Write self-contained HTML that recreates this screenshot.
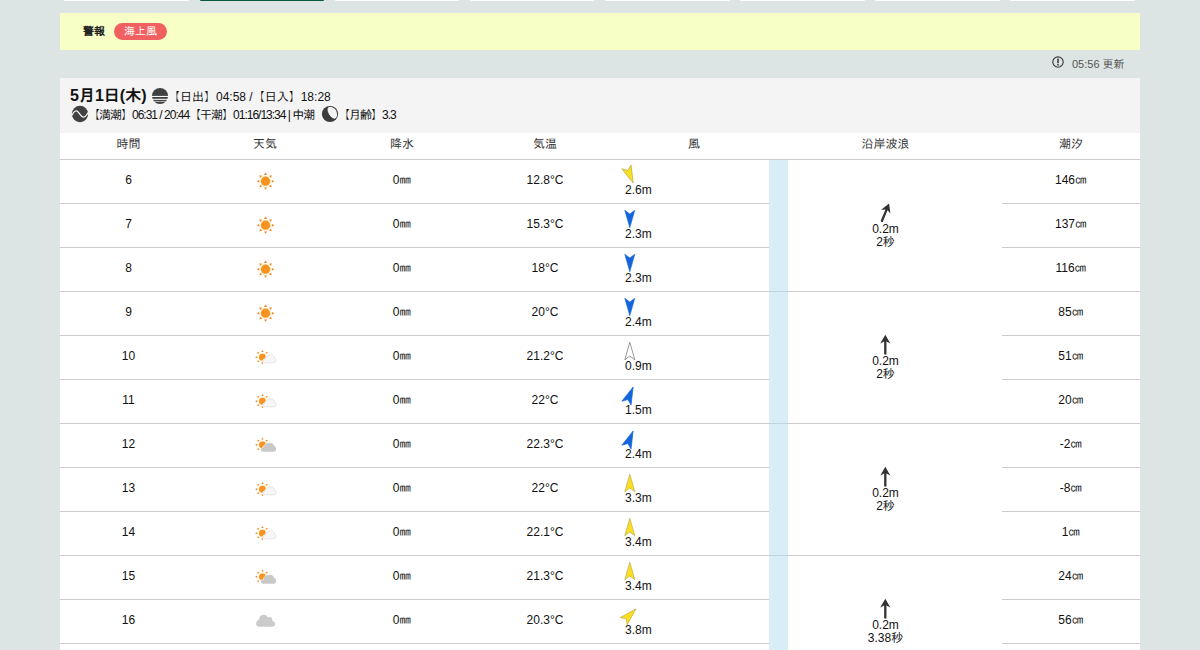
<!DOCTYPE html><html lang="ja"><head><meta charset="utf-8"><title>天気</title><style>
*{box-sizing:border-box;margin:0;padding:0}
html,body{width:1200px;height:650px;overflow:hidden}
body{background:#dde5e4;font-family:"Liberation Sans","IPAGothic",sans-serif;font-size:12px;color:#111;position:relative}
.tabs{position:absolute;left:65px;top:-20px;height:21px;width:1080px}
.tab{position:absolute;top:0;width:124.8px;height:21px;background:#fff;border-radius:0 0 1px 1px}
.tab.on{background:#0b5a3c}
.alert{position:absolute;left:60px;top:13px;width:1080px;height:37px;background:#f7ffc6}
.alert .lbl{position:absolute;left:23px;top:11px;font-size:11px;font-weight:bold;line-height:14px;color:#222}
.badge{position:absolute;left:54px;top:10px;width:53px;height:17px;border-radius:9px;background:#f06060;color:#fff;font-size:11px;line-height:17px;text-align:center}
.upd{position:absolute;left:1050px;top:56px;height:14px;font-size:11px;line-height:14px;color:#555}
.upd svg{position:absolute;left:1px;top:-1px}
.upd span{position:absolute;left:22px;top:1px;white-space:nowrap}
.day{position:absolute;left:60px;top:78px;width:1080px;height:600px;background:#f4f4f4}
.d1{position:absolute;left:10px;top:9px;font-size:16px;font-weight:bold;line-height:18px;white-space:nowrap;color:#111}
.sunic{position:absolute;left:91px;top:9px}
.sr{position:absolute;left:108px;top:12px;font-size:12px;line-height:14px;white-space:nowrap}
.tideic{position:absolute;left:11px;top:27px}
.td{position:absolute;left:28px;top:30px;font-size:12px;line-height:14px;white-space:nowrap;letter-spacing:-1px}
.moonic{position:absolute;left:261px;top:27px}
.mn{position:absolute;left:278px;top:30px;font-size:12px;line-height:14px;white-space:nowrap;letter-spacing:-1px}
table{position:absolute;left:0;top:55px;width:1080px;border-collapse:collapse;background:#fff;table-layout:fixed}
th{height:26px;font-weight:normal;font-size:12px;line-height:14px;padding:0 0 4px;color:#333;text-align:center;vertical-align:middle;border-bottom:1px solid #ccc}
td{height:44px;text-align:center;vertical-align:middle;border-bottom:1px solid #ccc;font-size:12px;line-height:14px;padding:0 0 3px;position:relative}
td.wind{text-align:left}
td.wind svg{position:absolute;left:0;top:0}
td.wind span{position:absolute;left:6px;top:23px;line-height:14px}
td.wave{border-bottom:1px solid #ccc}
td.wave .in{position:absolute;left:0;top:0;width:100%;height:100%}
.strip{position:absolute;left:709px;top:82px;width:19px;height:600px;background:rgba(179,219,239,0.5)}
td.wx svg{position:absolute;left:43px;top:0}
</style></head><body><div class="tabs"><div class="tab" style="left:-0.6px"></div><div class="tab on" style="left:134.5px"></div><div class="tab" style="left:269.6px"></div><div class="tab" style="left:404.7px"></div><div class="tab" style="left:539.8px"></div><div class="tab" style="left:674.9px"></div><div class="tab" style="left:810.0px"></div><div class="tab" style="left:945.1px"></div></div><div class="alert"><span class="lbl">警報</span><span class="badge">海上風</span></div><div class="upd"><svg width="14" height="14" viewBox="0 0 14 14"><circle cx="7" cy="7" r="5.2" fill="none" stroke="#3a3a3a" stroke-width="1.15"/><rect x="6.2" y="3.6" width="1.6" height="4.6" fill="#3a3a3a"/><rect x="6.2" y="9.1" width="1.6" height="1.5" fill="#3a3a3a"/></svg><span>05:56 更新</span></div><div class="day"><div class="d1">5月1日(木)</div><svg class="sunic" width="18" height="18" viewBox="0 0 18 18"><defs><clipPath id="c1"><circle cx="9" cy="9" r="8.05"/></clipPath></defs><g clip-path="url(#c1)" fill="#414141"><rect x="0" y="0" width="18" height="8.9"/><rect x="0" y="10" width="18" height="1.8"/><rect x="0" y="12.9" width="18" height="1.5"/><rect x="0" y="15" width="18" height="3"/></g></svg><div class="sr">【日出】04:58 /【日入】18:28</div><svg class="tideic" width="18" height="18" viewBox="0 0 18 18"><circle cx="9" cy="9" r="8.15" fill="#414141"/><path d="M1.1,10.2 C2.8,6.2 5.2,5 6.9,6.8 C8.1,8 9.5,10.5 11,11.6 C13,13 15.3,11.5 17,7.6" fill="none" stroke="#f4f4f4" stroke-width="1.25"/></svg><div class="td">【満潮】06:31 / 20:44【干潮】01:16/13:34 | 中潮</div><svg class="moonic" width="18" height="18" viewBox="0 0 18 18"><defs><clipPath id="c2"><circle cx="9" cy="9" r="7.05"/></clipPath></defs><circle cx="9" cy="9" r="8.1" fill="#3c3c3c"/><g clip-path="url(#c2)" fill="#f2f2f2"><ellipse cx="11.3" cy="7.6" rx="6.7" ry="3.7" transform="rotate(58 11.3 7.6)"/><path d="M6,-0.9 L16.6,16.1 L26.8,9.7 L16.2,-7.2 Z"/></g></svg><div class="mn">【月齢】3.3</div><table><colgroup><col style="width:137px"><col style="width:136px"><col style="width:138px"><col style="width:148px"><col style="width:150px"><col style="width:233px"><col style="width:138px"></colgroup><tr><th>時間</th><th>天気</th><th>降水</th><th>気温</th><th>風</th><th>沿岸波浪</th><th>潮汐</th></tr><tr><td>6</td><td class="wx"><svg width="60" height="40" viewBox="0 0 975 650"><circle cx="415" cy="345" r="92" fill="#fff1d6"/><circle cx="415" cy="345" r="75" fill="#f7931e"/><path transform="translate(415,345) rotate(0)" d="M0,-140 L26,-102 L-26,-102 Z" fill="#f08a24"/><path transform="translate(415,345) rotate(45)" d="M0,-140 L26,-102 L-26,-102 Z" fill="#f08a24"/><path transform="translate(415,345) rotate(90)" d="M0,-140 L26,-102 L-26,-102 Z" fill="#f08a24"/><path transform="translate(415,345) rotate(135)" d="M0,-140 L26,-102 L-26,-102 Z" fill="#f08a24"/><path transform="translate(415,345) rotate(180)" d="M0,-140 L26,-102 L-26,-102 Z" fill="#f08a24"/><path transform="translate(415,345) rotate(225)" d="M0,-140 L26,-102 L-26,-102 Z" fill="#f08a24"/><path transform="translate(415,345) rotate(270)" d="M0,-140 L26,-102 L-26,-102 Z" fill="#f08a24"/><path transform="translate(415,345) rotate(315)" d="M0,-140 L26,-102 L-26,-102 Z" fill="#f08a24"/></svg></td><td>0㎜</td><td>12.8°C</td><td class="wind"><svg width="40" height="44" viewBox="0 0 40 44"><g transform="translate(10.8,15) rotate(157.5)"><path d="M0,-8.75 L5,8.75 L0,5 L-5,8.75 Z" fill="#fbe01f" stroke="#b4a03c" stroke-width="0.6" stroke-linejoin="miter"/></g></svg><span>2.6m</span></td><td class="wave" rowspan="3"><div class="in"><svg style="position:absolute;left:101px;top:40px" width="30" height="24" viewBox="-15 -12 30 24"><g transform="translate(0.3,0.7) rotate(22.5)"><path d="M0,-10 L5.05,-1.1 L1.15,-3.1 L1.15,9.5 L0,10.1 L-1.15,9.5 L-1.15,-3.1 L-5.05,-1.1 Z" fill="#333"/></g></svg><div style="position:absolute;left:0;width:233px;top:63px;line-height:13px;text-align:center">0.2m<br>2秒</div></div></td><td>146㎝</td></tr><tr><td>7</td><td class="wx"><svg width="60" height="40" viewBox="0 0 975 650"><circle cx="415" cy="345" r="92" fill="#fff1d6"/><circle cx="415" cy="345" r="75" fill="#f7931e"/><path transform="translate(415,345) rotate(0)" d="M0,-140 L26,-102 L-26,-102 Z" fill="#f08a24"/><path transform="translate(415,345) rotate(45)" d="M0,-140 L26,-102 L-26,-102 Z" fill="#f08a24"/><path transform="translate(415,345) rotate(90)" d="M0,-140 L26,-102 L-26,-102 Z" fill="#f08a24"/><path transform="translate(415,345) rotate(135)" d="M0,-140 L26,-102 L-26,-102 Z" fill="#f08a24"/><path transform="translate(415,345) rotate(180)" d="M0,-140 L26,-102 L-26,-102 Z" fill="#f08a24"/><path transform="translate(415,345) rotate(225)" d="M0,-140 L26,-102 L-26,-102 Z" fill="#f08a24"/><path transform="translate(415,345) rotate(270)" d="M0,-140 L26,-102 L-26,-102 Z" fill="#f08a24"/><path transform="translate(415,345) rotate(315)" d="M0,-140 L26,-102 L-26,-102 Z" fill="#f08a24"/></svg></td><td>0㎜</td><td>15.3°C</td><td class="wind"><svg width="40" height="44" viewBox="0 0 40 44"><g transform="translate(10.8,15) rotate(180)"><path d="M0,-8.75 L5,8.75 L0,5 L-5,8.75 Z" fill="#1464dc" stroke="#1464dc" stroke-width="0.6" stroke-linejoin="miter"/></g></svg><span>2.3m</span></td><td>137㎝</td></tr><tr><td>8</td><td class="wx"><svg width="60" height="40" viewBox="0 0 975 650"><circle cx="415" cy="345" r="92" fill="#fff1d6"/><circle cx="415" cy="345" r="75" fill="#f7931e"/><path transform="translate(415,345) rotate(0)" d="M0,-140 L26,-102 L-26,-102 Z" fill="#f08a24"/><path transform="translate(415,345) rotate(45)" d="M0,-140 L26,-102 L-26,-102 Z" fill="#f08a24"/><path transform="translate(415,345) rotate(90)" d="M0,-140 L26,-102 L-26,-102 Z" fill="#f08a24"/><path transform="translate(415,345) rotate(135)" d="M0,-140 L26,-102 L-26,-102 Z" fill="#f08a24"/><path transform="translate(415,345) rotate(180)" d="M0,-140 L26,-102 L-26,-102 Z" fill="#f08a24"/><path transform="translate(415,345) rotate(225)" d="M0,-140 L26,-102 L-26,-102 Z" fill="#f08a24"/><path transform="translate(415,345) rotate(270)" d="M0,-140 L26,-102 L-26,-102 Z" fill="#f08a24"/><path transform="translate(415,345) rotate(315)" d="M0,-140 L26,-102 L-26,-102 Z" fill="#f08a24"/></svg></td><td>0㎜</td><td>18°C</td><td class="wind"><svg width="40" height="44" viewBox="0 0 40 44"><g transform="translate(10.8,15) rotate(180)"><path d="M0,-8.75 L5,8.75 L0,5 L-5,8.75 Z" fill="#1464dc" stroke="#1464dc" stroke-width="0.6" stroke-linejoin="miter"/></g></svg><span>2.3m</span></td><td>116㎝</td></tr><tr><td>9</td><td class="wx"><svg width="60" height="40" viewBox="0 0 975 650"><circle cx="415" cy="345" r="92" fill="#fff1d6"/><circle cx="415" cy="345" r="75" fill="#f7931e"/><path transform="translate(415,345) rotate(0)" d="M0,-140 L26,-102 L-26,-102 Z" fill="#f08a24"/><path transform="translate(415,345) rotate(45)" d="M0,-140 L26,-102 L-26,-102 Z" fill="#f08a24"/><path transform="translate(415,345) rotate(90)" d="M0,-140 L26,-102 L-26,-102 Z" fill="#f08a24"/><path transform="translate(415,345) rotate(135)" d="M0,-140 L26,-102 L-26,-102 Z" fill="#f08a24"/><path transform="translate(415,345) rotate(180)" d="M0,-140 L26,-102 L-26,-102 Z" fill="#f08a24"/><path transform="translate(415,345) rotate(225)" d="M0,-140 L26,-102 L-26,-102 Z" fill="#f08a24"/><path transform="translate(415,345) rotate(270)" d="M0,-140 L26,-102 L-26,-102 Z" fill="#f08a24"/><path transform="translate(415,345) rotate(315)" d="M0,-140 L26,-102 L-26,-102 Z" fill="#f08a24"/></svg></td><td>0㎜</td><td>20°C</td><td class="wind"><svg width="40" height="44" viewBox="0 0 40 44"><g transform="translate(10.8,15) rotate(180)"><path d="M0,-8.75 L5,8.75 L0,5 L-5,8.75 Z" fill="#1464dc" stroke="#1464dc" stroke-width="0.6" stroke-linejoin="miter"/></g></svg><span>2.4m</span></td><td class="wave" rowspan="3"><div class="in"><svg style="position:absolute;left:101px;top:40px" width="30" height="24" viewBox="-15 -12 30 24"><g transform="translate(0.3,0.7) rotate(0)"><path d="M0,-10 L5.05,-1.1 L1.15,-3.1 L1.15,9.5 L0,10.1 L-1.15,9.5 L-1.15,-3.1 L-5.05,-1.1 Z" fill="#333"/></g></svg><div style="position:absolute;left:0;width:233px;top:63px;line-height:13px;text-align:center">0.2m<br>2秒</div></div></td><td>85㎝</td></tr><tr><td>10</td><td class="wx"><svg width="60" height="40" viewBox="0 0 975 650"><circle cx="365" cy="345" r="70" fill="#fff1d6"/><circle cx="365" cy="345" r="55" fill="#f7931e"/><path transform="translate(365,345) rotate(0)" d="M0,-118 L20,-86 L-20,-86 Z" fill="#f08a24"/><path transform="translate(365,345) rotate(45)" d="M0,-118 L20,-86 L-20,-86 Z" fill="#f08a24"/><path transform="translate(365,345) rotate(90)" d="M0,-118 L20,-86 L-20,-86 Z" fill="#f08a24"/><path transform="translate(365,345) rotate(135)" d="M0,-118 L20,-86 L-20,-86 Z" fill="#f08a24"/><path transform="translate(365,345) rotate(180)" d="M0,-118 L20,-86 L-20,-86 Z" fill="#f08a24"/><path transform="translate(365,345) rotate(225)" d="M0,-118 L20,-86 L-20,-86 Z" fill="#f08a24"/><path transform="translate(365,345) rotate(270)" d="M0,-118 L20,-86 L-20,-86 Z" fill="#f08a24"/><path transform="translate(365,345) rotate(315)" d="M0,-118 L20,-86 L-20,-86 Z" fill="#f08a24"/><g transform="translate(92.4,30.0) scale(0.84,0.9)"><path d="M375,450 C352,450 340,435 340,418 C340,398 355,385 378,385 C385,340 430,305 485,305 C520,305 545,325 552,355 C575,362 587,385 587,410 C587,435 570,450 548,450 Z" fill="#fff" stroke="#fff" stroke-width="26"/><path d="M375,450 C352,450 340,435 340,418 C340,398 355,385 378,385 C385,340 430,305 485,305 C520,305 545,325 552,355 C575,362 587,385 587,410 C587,435 570,450 548,450 Z" fill="#f7f7fa" stroke="#d2d2da" stroke-width="10"/></g></svg></td><td>0㎜</td><td>21.2°C</td><td class="wind"><svg width="40" height="44" viewBox="0 0 40 44"><g transform="translate(10.8,15) rotate(0)"><path d="M0,-8.75 L5,8.75 L0,5 L-5,8.75 Z" fill="#ffffff" stroke="#555" stroke-width="0.6" stroke-linejoin="miter"/></g></svg><span>0.9m</span></td><td>51㎝</td></tr><tr><td>11</td><td class="wx"><svg width="60" height="40" viewBox="0 0 975 650"><circle cx="365" cy="345" r="70" fill="#fff1d6"/><circle cx="365" cy="345" r="55" fill="#f7931e"/><path transform="translate(365,345) rotate(0)" d="M0,-118 L20,-86 L-20,-86 Z" fill="#f08a24"/><path transform="translate(365,345) rotate(45)" d="M0,-118 L20,-86 L-20,-86 Z" fill="#f08a24"/><path transform="translate(365,345) rotate(90)" d="M0,-118 L20,-86 L-20,-86 Z" fill="#f08a24"/><path transform="translate(365,345) rotate(135)" d="M0,-118 L20,-86 L-20,-86 Z" fill="#f08a24"/><path transform="translate(365,345) rotate(180)" d="M0,-118 L20,-86 L-20,-86 Z" fill="#f08a24"/><path transform="translate(365,345) rotate(225)" d="M0,-118 L20,-86 L-20,-86 Z" fill="#f08a24"/><path transform="translate(365,345) rotate(270)" d="M0,-118 L20,-86 L-20,-86 Z" fill="#f08a24"/><path transform="translate(365,345) rotate(315)" d="M0,-118 L20,-86 L-20,-86 Z" fill="#f08a24"/><g transform="translate(92.4,30.0) scale(0.84,0.9)"><path d="M375,450 C352,450 340,435 340,418 C340,398 355,385 378,385 C385,340 430,305 485,305 C520,305 545,325 552,355 C575,362 587,385 587,410 C587,435 570,450 548,450 Z" fill="#fff" stroke="#fff" stroke-width="26"/><path d="M375,450 C352,450 340,435 340,418 C340,398 355,385 378,385 C385,340 430,305 485,305 C520,305 545,325 552,355 C575,362 587,385 587,410 C587,435 570,450 548,450 Z" fill="#f7f7fa" stroke="#d2d2da" stroke-width="10"/></g></svg></td><td>0㎜</td><td>22°C</td><td class="wind"><svg width="40" height="44" viewBox="0 0 40 44"><g transform="translate(10.8,15) rotate(22.5)"><path d="M0,-8.75 L5,8.75 L0,5 L-5,8.75 Z" fill="#1464dc" stroke="#1464dc" stroke-width="0.6" stroke-linejoin="miter"/></g></svg><span>1.5m</span></td><td>20㎝</td></tr><tr><td>12</td><td class="wx"><svg width="60" height="40" viewBox="0 0 975 650"><circle cx="365" cy="338" r="70" fill="#fff1d6"/><circle cx="365" cy="338" r="55" fill="#f7931e"/><path transform="translate(365,338) rotate(0)" d="M0,-118 L20,-86 L-20,-86 Z" fill="#f08a24"/><path transform="translate(365,338) rotate(45)" d="M0,-118 L20,-86 L-20,-86 Z" fill="#f08a24"/><path transform="translate(365,338) rotate(90)" d="M0,-118 L20,-86 L-20,-86 Z" fill="#f08a24"/><path transform="translate(365,338) rotate(135)" d="M0,-118 L20,-86 L-20,-86 Z" fill="#f08a24"/><path transform="translate(365,338) rotate(180)" d="M0,-118 L20,-86 L-20,-86 Z" fill="#f08a24"/><path transform="translate(365,338) rotate(225)" d="M0,-118 L20,-86 L-20,-86 Z" fill="#f08a24"/><path transform="translate(365,338) rotate(270)" d="M0,-118 L20,-86 L-20,-86 Z" fill="#f08a24"/><path transform="translate(365,338) rotate(315)" d="M0,-118 L20,-86 L-20,-86 Z" fill="#f08a24"/><g transform="translate(0.0,0.0) scale(1,1)"><path d="M375,450 C352,450 340,435 340,418 C340,398 355,385 378,385 C385,340 430,305 485,305 C520,305 545,325 552,355 C575,362 587,385 587,410 C587,435 570,450 548,450 Z" fill="#fff" stroke="#fff" stroke-width="16"/><path d="M375,450 C352,450 340,435 340,418 C340,398 355,385 378,385 C385,340 430,305 485,305 C520,305 545,325 552,355 C575,362 587,385 587,410 C587,435 570,450 548,450 Z" fill="#c9c9c9"/></g></svg></td><td>0㎜</td><td>22.3°C</td><td class="wind"><svg width="40" height="44" viewBox="0 0 40 44"><g transform="translate(10.8,15) rotate(22.5)"><path d="M0,-8.75 L5,8.75 L0,5 L-5,8.75 Z" fill="#1464dc" stroke="#1464dc" stroke-width="0.6" stroke-linejoin="miter"/></g></svg><span>2.4m</span></td><td class="wave" rowspan="3"><div class="in"><svg style="position:absolute;left:101px;top:40px" width="30" height="24" viewBox="-15 -12 30 24"><g transform="translate(0.3,0.7) rotate(0)"><path d="M0,-10 L5.05,-1.1 L1.15,-3.1 L1.15,9.5 L0,10.1 L-1.15,9.5 L-1.15,-3.1 L-5.05,-1.1 Z" fill="#333"/></g></svg><div style="position:absolute;left:0;width:233px;top:63px;line-height:13px;text-align:center">0.2m<br>2秒</div></div></td><td>-2㎝</td></tr><tr><td>13</td><td class="wx"><svg width="60" height="40" viewBox="0 0 975 650"><circle cx="365" cy="345" r="70" fill="#fff1d6"/><circle cx="365" cy="345" r="55" fill="#f7931e"/><path transform="translate(365,345) rotate(0)" d="M0,-118 L20,-86 L-20,-86 Z" fill="#f08a24"/><path transform="translate(365,345) rotate(45)" d="M0,-118 L20,-86 L-20,-86 Z" fill="#f08a24"/><path transform="translate(365,345) rotate(90)" d="M0,-118 L20,-86 L-20,-86 Z" fill="#f08a24"/><path transform="translate(365,345) rotate(135)" d="M0,-118 L20,-86 L-20,-86 Z" fill="#f08a24"/><path transform="translate(365,345) rotate(180)" d="M0,-118 L20,-86 L-20,-86 Z" fill="#f08a24"/><path transform="translate(365,345) rotate(225)" d="M0,-118 L20,-86 L-20,-86 Z" fill="#f08a24"/><path transform="translate(365,345) rotate(270)" d="M0,-118 L20,-86 L-20,-86 Z" fill="#f08a24"/><path transform="translate(365,345) rotate(315)" d="M0,-118 L20,-86 L-20,-86 Z" fill="#f08a24"/><g transform="translate(92.4,30.0) scale(0.84,0.9)"><path d="M375,450 C352,450 340,435 340,418 C340,398 355,385 378,385 C385,340 430,305 485,305 C520,305 545,325 552,355 C575,362 587,385 587,410 C587,435 570,450 548,450 Z" fill="#fff" stroke="#fff" stroke-width="26"/><path d="M375,450 C352,450 340,435 340,418 C340,398 355,385 378,385 C385,340 430,305 485,305 C520,305 545,325 552,355 C575,362 587,385 587,410 C587,435 570,450 548,450 Z" fill="#f7f7fa" stroke="#d2d2da" stroke-width="10"/></g></svg></td><td>0㎜</td><td>22°C</td><td class="wind"><svg width="40" height="44" viewBox="0 0 40 44"><g transform="translate(10.8,15) rotate(0)"><path d="M0,-8.75 L5,8.75 L0,5 L-5,8.75 Z" fill="#fbe01f" stroke="#b4a03c" stroke-width="0.6" stroke-linejoin="miter"/></g></svg><span>3.3m</span></td><td>-8㎝</td></tr><tr><td>14</td><td class="wx"><svg width="60" height="40" viewBox="0 0 975 650"><circle cx="365" cy="345" r="70" fill="#fff1d6"/><circle cx="365" cy="345" r="55" fill="#f7931e"/><path transform="translate(365,345) rotate(0)" d="M0,-118 L20,-86 L-20,-86 Z" fill="#f08a24"/><path transform="translate(365,345) rotate(45)" d="M0,-118 L20,-86 L-20,-86 Z" fill="#f08a24"/><path transform="translate(365,345) rotate(90)" d="M0,-118 L20,-86 L-20,-86 Z" fill="#f08a24"/><path transform="translate(365,345) rotate(135)" d="M0,-118 L20,-86 L-20,-86 Z" fill="#f08a24"/><path transform="translate(365,345) rotate(180)" d="M0,-118 L20,-86 L-20,-86 Z" fill="#f08a24"/><path transform="translate(365,345) rotate(225)" d="M0,-118 L20,-86 L-20,-86 Z" fill="#f08a24"/><path transform="translate(365,345) rotate(270)" d="M0,-118 L20,-86 L-20,-86 Z" fill="#f08a24"/><path transform="translate(365,345) rotate(315)" d="M0,-118 L20,-86 L-20,-86 Z" fill="#f08a24"/><g transform="translate(92.4,30.0) scale(0.84,0.9)"><path d="M375,450 C352,450 340,435 340,418 C340,398 355,385 378,385 C385,340 430,305 485,305 C520,305 545,325 552,355 C575,362 587,385 587,410 C587,435 570,450 548,450 Z" fill="#fff" stroke="#fff" stroke-width="26"/><path d="M375,450 C352,450 340,435 340,418 C340,398 355,385 378,385 C385,340 430,305 485,305 C520,305 545,325 552,355 C575,362 587,385 587,410 C587,435 570,450 548,450 Z" fill="#f7f7fa" stroke="#d2d2da" stroke-width="10"/></g></svg></td><td>0㎜</td><td>22.1°C</td><td class="wind"><svg width="40" height="44" viewBox="0 0 40 44"><g transform="translate(10.8,15) rotate(0)"><path d="M0,-8.75 L5,8.75 L0,5 L-5,8.75 Z" fill="#fbe01f" stroke="#b4a03c" stroke-width="0.6" stroke-linejoin="miter"/></g></svg><span>3.4m</span></td><td>1㎝</td></tr><tr><td>15</td><td class="wx"><svg width="60" height="40" viewBox="0 0 975 650"><circle cx="365" cy="338" r="70" fill="#fff1d6"/><circle cx="365" cy="338" r="55" fill="#f7931e"/><path transform="translate(365,338) rotate(0)" d="M0,-118 L20,-86 L-20,-86 Z" fill="#f08a24"/><path transform="translate(365,338) rotate(45)" d="M0,-118 L20,-86 L-20,-86 Z" fill="#f08a24"/><path transform="translate(365,338) rotate(90)" d="M0,-118 L20,-86 L-20,-86 Z" fill="#f08a24"/><path transform="translate(365,338) rotate(135)" d="M0,-118 L20,-86 L-20,-86 Z" fill="#f08a24"/><path transform="translate(365,338) rotate(180)" d="M0,-118 L20,-86 L-20,-86 Z" fill="#f08a24"/><path transform="translate(365,338) rotate(225)" d="M0,-118 L20,-86 L-20,-86 Z" fill="#f08a24"/><path transform="translate(365,338) rotate(270)" d="M0,-118 L20,-86 L-20,-86 Z" fill="#f08a24"/><path transform="translate(365,338) rotate(315)" d="M0,-118 L20,-86 L-20,-86 Z" fill="#f08a24"/><g transform="translate(0.0,0.0) scale(1,1)"><path d="M375,450 C352,450 340,435 340,418 C340,398 355,385 378,385 C385,340 430,305 485,305 C520,305 545,325 552,355 C575,362 587,385 587,410 C587,435 570,450 548,450 Z" fill="#fff" stroke="#fff" stroke-width="16"/><path d="M375,450 C352,450 340,435 340,418 C340,398 355,385 378,385 C385,340 430,305 485,305 C520,305 545,325 552,355 C575,362 587,385 587,410 C587,435 570,450 548,450 Z" fill="#c9c9c9"/></g></svg></td><td>0㎜</td><td>21.3°C</td><td class="wind"><svg width="40" height="44" viewBox="0 0 40 44"><g transform="translate(10.8,15) rotate(0)"><path d="M0,-8.75 L5,8.75 L0,5 L-5,8.75 Z" fill="#fbe01f" stroke="#b4a03c" stroke-width="0.6" stroke-linejoin="miter"/></g></svg><span>3.4m</span></td><td class="wave" rowspan="3"><div class="in"><svg style="position:absolute;left:101px;top:40px" width="30" height="24" viewBox="-15 -12 30 24"><g transform="translate(0.3,0.7) rotate(0)"><path d="M0,-10 L5.05,-1.1 L1.15,-3.1 L1.15,9.5 L0,10.1 L-1.15,9.5 L-1.15,-3.1 L-5.05,-1.1 Z" fill="#333"/></g></svg><div style="position:absolute;left:0;width:233px;top:63px;line-height:13px;text-align:center">0.2m<br>3.38秒</div></div></td><td>24㎝</td></tr><tr><td>16</td><td class="wx"><svg width="60" height="40" viewBox="0 0 975 650"><g transform="translate(0.0,0.0) scale(1,1)"><path d="M315,435 C285,435 262,415 262,385 C262,352 280,326 306,320 C313,272 345,240 385,240 C420,240 445,258 455,285 C465,278 475,275 485,275 C515,275 530,300 525,340 C555,345 570,365 570,390 C570,415 550,435 520,435 Z" fill="#cbcbcb"/></g></svg></td><td>0㎜</td><td>20.3°C</td><td class="wind"><svg width="40" height="44" viewBox="0 0 40 44"><g transform="translate(10.8,15) rotate(45)"><path d="M0,-8.75 L5,8.75 L0,5 L-5,8.75 Z" fill="#fbe01f" stroke="#b4a03c" stroke-width="0.6" stroke-linejoin="miter"/></g></svg><span>3.8m</span></td><td>56㎝</td></tr><tr><td>17</td><td class="wx"><svg width="60" height="40" viewBox="0 0 975 650"><g transform="translate(0.0,0.0) scale(1,1)"><path d="M315,435 C285,435 262,415 262,385 C262,352 280,326 306,320 C313,272 345,240 385,240 C420,240 445,258 455,285 C465,278 475,275 485,275 C515,275 530,300 525,340 C555,345 570,365 570,390 C570,415 550,435 520,435 Z" fill="#cbcbcb"/></g></svg></td><td>0㎜</td><td>19.5°C</td><td class="wind"><svg width="40" height="44" viewBox="0 0 40 44"><g transform="translate(10.8,15) rotate(45)"><path d="M0,-8.75 L5,8.75 L0,5 L-5,8.75 Z" fill="#fbe01f" stroke="#b4a03c" stroke-width="0.6" stroke-linejoin="miter"/></g></svg><span>3.9m</span></td><td>90㎝</td></tr></table><div class="strip"></div></div></body></html>
